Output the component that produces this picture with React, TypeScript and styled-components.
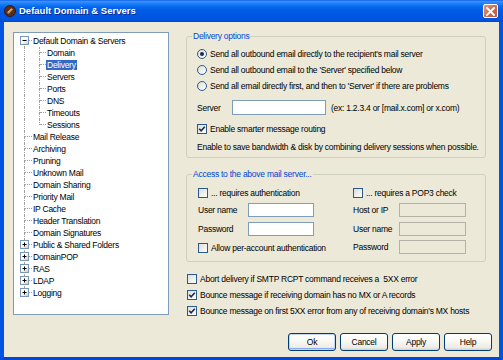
import React from 'react';
import styled, { createGlobalStyle } from 'styled-components';

const Global = createGlobalStyle`
  html, body { margin: 0; padding: 0; background: #fff; }
  body { font-family: "Liberation Sans", Arial, sans-serif; font-size: 8.5px; letter-spacing: -0.25px; color: #000; }
  * { box-sizing: border-box; }
`;

const Window = styled.div`
  width: 503px;
  height: 360px;
  display: flex;
  flex-direction: column;
  overflow: hidden;
`;

const TitleBar = styled.div`
  height: 22px;
  flex: none;
  display: flex;
  align-items: center;
  gap: 3px;
  padding: 0 5px 0 4px;
  background: linear-gradient(to bottom, #0A5DE8 0%, #3D93FF 6%, #2A87FA 12%, #1276F5 22%, #0467EE 32%, #005DE6 45%, #0058E2 65%, #0055E0 85%, #004FD8 95%, #0045C8 100%);
  color: #fff;
  font-weight: bold;
  font-size: 9.5px;
  letter-spacing: 0;
  text-shadow: 1px 1px 0 #0A2A8A;
`;

const TitleText = styled.span`
  flex: 1;
  line-height: 12px;
`;

const CloseBtn = styled.div`
  width: 15px;
  height: 14px;
  border: 1px solid #fff;
  border-radius: 2px;
  background: linear-gradient(135deg, #E59A7C 0%, #CF7452 45%, #B8583A 100%);
  display: flex;
  align-items: center;
  justify-content: center;
`;

const Body = styled.div`
  flex: 1;
  min-height: 0;
  display: flex;
  gap: 17px;
  background: #ECE9D8;
  border-left: 4px solid #0054E3;
  border-right: 4px solid #0054E3;
  border-bottom: 3px solid #0047D5;
  padding: 10px 7px 0 9px;
`;

const TreePanel = styled.div`
  flex: none;
  width: 156px;
  height: 283px;
  border: 1px solid #7F9DB9;
  background: #fff;
  padding: 2px 0 0 3px;
`;

const TreeRow = styled.div`
  height: 12px;
  display: flex;
  align-items: center;
`;

const Gutter = styled.span`
  position: relative;
  flex: none;
  width: ${p => p.$w}px;
  height: 12px;
  display: grid;
  grid-template-columns: 8px 1fr;
  grid-template-rows: 6px 6px;
`;

const GUp = styled.span`
  border-right: ${p => (p.$on ? '1px dotted #A0A0A0' : 'none')};
`;
const GStub = styled.span`
  border-bottom: 1px dotted #A0A0A0;
`;
const GDown = styled.span`
  grid-column: 1;
  border-right: ${p => (p.$on ? '1px dotted #A0A0A0' : 'none')};
`;

const Cont = styled.span`
  flex: none;
  width: 8px;
  height: 12px;
  margin-right: 7px;
  border-right: 1px dotted #A0A0A0;
`;

const Expander = styled.span`
  position: absolute;
  left: 3px;
  top: 1px;
  width: 9px;
  height: 9px;
  border: 1px solid #7898B5;
  background: linear-gradient(135deg, #fff 40%, #D4D0C8);
  display: flex;
  align-items: center;
  justify-content: center;
`;

const TreeLabel = styled.span`
  padding: 0 1px;
  height: 10px;
  line-height: 10px;
  white-space: nowrap;
  background: ${p => (p.$sel ? '#316AC5' : 'transparent')};
  color: ${p => (p.$sel ? '#fff' : '#000')};
`;

const RightCol = styled.div`
  flex: none;
  width: 306px;
  margin-top: -1px;
  display: flex;
  flex-direction: column;
`;

const Group = styled.fieldset`
  width: 300px;
  margin: ${p => p.$mt || 0}px 0 0 0;
  padding: 0;
  border: 1px solid #D0D0BF;
  border-radius: 3px;
  min-inline-size: 0;
`;

const Legend = styled.legend`
  margin-left: 5px;
  padding: 0 1px;
  line-height: 10px;
  font-size: 8.5px;
  color: #0046D5;
`;

const G1Content = styled.div`
  padding: 5px 0 5px 10px;
  display: flex;
  flex-direction: column;
`;

const RadioRow = styled.label`
  height: 16px;
  display: flex;
  align-items: center;
  gap: 3px;
  white-space: nowrap;
`;

const RadioCircle = styled.span`
  width: 10px;
  height: 10px;
  border-radius: 50%;
  border: 1px solid #2A5A8C;
  background: linear-gradient(135deg, #DCDCD7, #fff);
  display: flex;
  align-items: center;
  justify-content: center;
`;

const RadioDot = styled.span`
  width: 4px;
  height: 4px;
  border-radius: 50%;
  background: #1F2A44;
`;

const ServerRow = styled.div`
  margin-top: 6px;
  height: 15px;
  display: flex;
  align-items: center;
`;

const FieldLabel = styled.span`
  flex: none;
  width: ${p => p.$w}px;
  white-space: nowrap;
`;

const TextInput = styled.div`
  flex: none;
  width: ${p => p.$w}px;
  height: ${p => p.$h || 14}px;
  border: 1px solid ${p => (p.$disabled ? '#B4B2A6' : '#7F9DB9')};
  background: ${p => (p.$disabled ? '#ECE9D8' : '#fff')};
`;

const Hint = styled.span`
  margin-left: 5px;
  white-space: nowrap;
`;

const CheckRow = styled.label`
  margin-top: ${p => p.$mt || 0}px;
  height: 12px;
  display: flex;
  align-items: center;
  gap: 3px;
  white-space: nowrap;
`;

const CheckBox = styled.span`
  flex: none;
  width: 10px;
  height: 10px;
  border: 1px solid #2A5A8C;
  background: linear-gradient(135deg, #DCDCD7, #fff);
  display: flex;
  align-items: center;
  justify-content: center;
`;

const Note = styled.div`
  margin-top: 7px;
  line-height: 10px;
  white-space: nowrap;
`;

const G2Content = styled.div`
  display: grid;
  grid-template-columns: 155px 1fr;
  padding: 8px 0 7px 11px;
`;

const Column = styled.div`
  display: flex;
  flex-direction: column;
`;

const FieldRow = styled.div`
  margin-top: ${p => p.$mt || 0}px;
  height: 14px;
  display: flex;
  align-items: center;
`;

const BottomChecks = styled.div`
  margin-top: 11px;
  padding-left: 1px;
  display: flex;
  flex-direction: column;
  gap: 4px;
`;

const ButtonRow = styled.div`
  margin-top: 16px;
  display: flex;
  justify-content: flex-end;
  gap: 4px;
`;

const Button = styled.button`
  width: 48px;
  height: 18px;
  padding: 0;
  border: 1px solid #003C74;
  border-radius: 3px;
  background: linear-gradient(to bottom, #FFFFFF 0%, #F7F7F3 50%, #ECEBE5 85%, #D6D0C5 100%);
  font-family: "Liberation Sans", Arial, sans-serif;
  font-size: 8.5px;
  letter-spacing: -0.25px;
  color: #000;
  box-shadow: ${p => (p.$def ? 'inset 0 0 0 1px #C3D5F5, inset 0 -1px 0 1px #8FAAE6' : 'none')};
`;

const AppIcon = () => (
  <svg width="12" height="12" viewBox="0 0 12 12">
    <circle cx="6" cy="6" r="5.5" fill="#5C2E14" stroke="#2A1204" strokeWidth="0.8" />
    <path d="M3 7.5 L7.5 3 L9 4.5 L4.5 9 Z" fill="#C98A5E" />
    <path d="M4.2 7.2 L7.2 4.2" stroke="#F0D0B0" strokeWidth="0.8" />
  </svg>
);

const CloseIcon = () => (
  <svg width="9" height="9" viewBox="0 0 9 9">
    <path d="M1 1 L8 8 M8 1 L1 8" stroke="#fff" strokeWidth="1.8" strokeLinecap="square" />
  </svg>
);

const Sign = ({ plus }: { plus?: boolean }) => (
  <svg width="7" height="7" viewBox="0 0 7 7">
    <path d="M1.5 3.5 H5.5" stroke="#000" strokeWidth="1" />
    {plus && <path d="M3.5 1.5 V5.5" stroke="#000" strokeWidth="1" />}
  </svg>
);

const CheckMark = () => (
  <svg width="8" height="8" viewBox="0 0 8 8">
    <path d="M1.2 3.8 L3.1 5.8 L6.8 1.8" fill="none" stroke="#1E2A4A" strokeWidth="1.6" />
  </svg>
);

const Check = ({ on, children, mt }: { on?: boolean; children: React.ReactNode; mt?: number }) => (
  <CheckRow $mt={mt}>
    <CheckBox>{on && <CheckMark />}</CheckBox>
    <span>{children}</span>
  </CheckRow>
);

const Radio = ({ on, children }: { on?: boolean; children: React.ReactNode }) => (
  <RadioRow>
    <RadioCircle>{on && <RadioDot />}</RadioCircle>
    <span>{children}</span>
  </RadioRow>
);

type Node = { label: string; level: 0 | 1; box?: 'minus' | 'plus'; first?: boolean; last?: boolean; sel?: boolean };

const nodes: Node[] = [
  { label: 'Default Domain & Servers', level: 0, box: 'minus', first: true },
  { label: 'Domain', level: 1 },
  { label: 'Delivery', level: 1, sel: true },
  { label: 'Servers', level: 1 },
  { label: 'Ports', level: 1 },
  { label: 'DNS', level: 1 },
  { label: 'Timeouts', level: 1 },
  { label: 'Sessions', level: 1, last: true },
  { label: 'Mail Release', level: 0 },
  { label: 'Archiving', level: 0 },
  { label: 'Pruning', level: 0 },
  { label: 'Unknown Mail', level: 0 },
  { label: 'Domain Sharing', level: 0 },
  { label: 'Priority Mail', level: 0 },
  { label: 'IP Cache', level: 0 },
  { label: 'Header Translation', level: 0 },
  { label: 'Domain Signatures', level: 0 },
  { label: 'Public & Shared Folders', level: 0, box: 'plus' },
  { label: 'DomainPOP', level: 0, box: 'plus' },
  { label: 'RAS', level: 0, box: 'plus' },
  { label: 'LDAP', level: 0, box: 'plus' },
  { label: 'Logging', level: 0, box: 'plus', last: true },
];

const Tree = () => (
  <TreePanel>
    {nodes.map((n, i) => (
      <TreeRow key={i}>
        {n.level === 1 && <Cont />}
        <Gutter $w={n.level === 0 ? 15 : 14}>
          <GUp $on={!n.first} />
          <GStub />
          <GDown $on={!n.last} />
          {n.box && (
            <Expander>
              <Sign plus={n.box === 'plus'} />
            </Expander>
          )}
        </Gutter>
        <TreeLabel $sel={n.sel}>{n.label}</TreeLabel>
      </TreeRow>
    ))}
  </TreePanel>
);

export default function App() {
  return (
    <Window>
      <Global />
      <TitleBar>
        <AppIcon />
        <TitleText>Default Domain &amp; Servers</TitleText>
        <CloseBtn>
          <CloseIcon />
        </CloseBtn>
      </TitleBar>
      <Body>
        <Tree />
        <RightCol>
          <Group>
            <Legend>Delivery options</Legend>
            <G1Content>
              <Radio on>Send all outbound email directly to the recipient's mail server</Radio>
              <Radio>Send all outbound email to the 'Server' specified below</Radio>
              <Radio>Send all email directly first, and then to 'Server' if there are problems</Radio>
              <ServerRow>
                <FieldLabel $w={35}>Server</FieldLabel>
                <TextInput $w={94} $h={15} />
                <Hint>(ex: 1.2.3.4 or [mail.x.com] or x.com)</Hint>
              </ServerRow>
              <Check on mt={8}>Enable smarter message routing</Check>
              <Note>Enable to save bandwidth &amp; disk by combining delivery sessions when possible.</Note>
            </G1Content>
          </Group>
          <Group $mt={11}>
            <Legend>Access to the above mail server...</Legend>
            <G2Content>
              <Column>
                <Check>... requires authentication</Check>
                <FieldRow $mt={4}>
                  <FieldLabel $w={50}>User name</FieldLabel>
                  <TextInput $w={66} />
                </FieldRow>
                <FieldRow $mt={5}>
                  <FieldLabel $w={50}>Password</FieldLabel>
                  <TextInput $w={66} />
                </FieldRow>
                <Check mt={6}>Allow per-account authentication</Check>
              </Column>
              <Column>
                <Check>... requires a POP3 check</Check>
                <FieldRow $mt={4}>
                  <FieldLabel $w={46}>Host or IP</FieldLabel>
                  <TextInput $w={67} $disabled />
                </FieldRow>
                <FieldRow $mt={5}>
                  <FieldLabel $w={46}>User name</FieldLabel>
                  <TextInput $w={67} $disabled />
                </FieldRow>
                <FieldRow $mt={4}>
                  <FieldLabel $w={46}>Password</FieldLabel>
                  <TextInput $w={67} $disabled />
                </FieldRow>
              </Column>
            </G2Content>
          </Group>
          <BottomChecks>
            <Check>Abort delivery if SMTP RCPT command receives a{'\u00a0'} 5XX error</Check>
            <Check on>Bounce message if receiving domain has no MX or A records</Check>
            <Check on>Bounce message on first 5XX error from any of receiving domain's MX hosts</Check>
          </BottomChecks>
          <ButtonRow>
            <Button $def>Ok</Button>
            <Button>Cancel</Button>
            <Button>Apply</Button>
            <Button>Help</Button>
          </ButtonRow>
        </RightCol>
      </Body>
    </Window>
  );
}
